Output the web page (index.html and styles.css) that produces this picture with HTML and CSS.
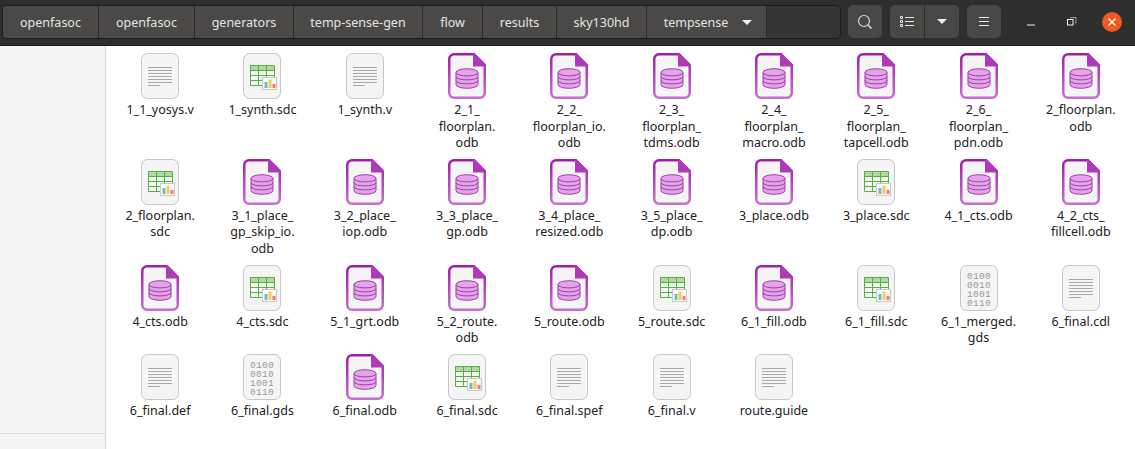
FILE: index.html
```html
<!DOCTYPE html>
<html lang="en">
<head>
  <meta charset="UTF-8" />
  <title>tempsense</title>
  <link rel="stylesheet" href="styles.css">
</head>
<body>
  <svg class="defs" aria-hidden="true">
    <defs>
      <linearGradient id="purple" x1="0" y1="0" x2="0" y2="1">
        <stop offset="0" stop-color="#a01fa8" />
        <stop offset="1" stop-color="#c76fd0" />
      </linearGradient>
      <symbol id="text" viewBox="0 0 48 48">
        <rect x="5.5" y="1.5" width="37" height="45" rx="6" fill="#f5f5f5" stroke="#c6c6c6" />
        <path d="M12 15.500h24M12 18.500h24M12 21.500h24M12 24.500h24M12 27.500h24M12 30.500h24M12 33.500h12" stroke="#a8a8a8" fill="none" />
      </symbol>
      <symbol id="sheet" viewBox="0 0 48 48">
        <rect x="5.5" y="1.5" width="37" height="45" rx="6" fill="#f5f5f5" stroke="#c6c6c6" />
        <rect x="12" y="13" width="24" height="5" fill="#b4d8a4" />
        <path d="M12.500 13.500h24v20h-24zM12.500 18.500h24M12.500 23.500h24M12.500 28.500h24M20.500 13.500v20M28.500 13.500v20" stroke="#55b043" fill="none" />
        <rect x="24.5" y="25.5" width="14" height="12" fill="#fafafa" stroke="#c8c8c8" />
        <rect x="26.5" y="30" width="3" height="6" fill="#6fbdc2" />
        <rect x="30.5" y="27.5" width="3" height="8.5" fill="#f5cb62" />
        <rect x="34.5" y="32" width="3" height="4" fill="#f37c62" />
      </symbol>
      <symbol id="base" viewBox="0 0 48 48">
        <path d="M11 2.250h20l10.750 10.750v28a4.750 4.750 0 0 1-4.750 4.750h-26a4.750 4.750 0 0 1-4.750-4.750v-34a4.750 4.750 0 0 1 4.750-4.750z" fill="#f5f5f5" stroke="url(#purple)" stroke-width="2.500" />
        <path d="M30 1.500h1.500l11.500 11.500v1.500h-13z" fill="#ae3ab6" />
        <path d="M13 20.500c0-5 22-5 22 0v12c0 5-22 5-22 0z" fill="#e2a6e8" stroke="#a53cae" />
        <path d="M13 20.500c0 4.500 22 4.500 22 0M13 24.500c0 4.500 22 4.500 22 0M13 28.500c0 4.500 22 4.500 22 0" fill="none" stroke="#a53cae" />
      </symbol>
      <symbol id="bin" viewBox="0 0 48 48">
        <rect x="5.5" y="1.5" width="37" height="45" rx="6" fill="#f5f5f5" stroke="#c6c6c6" />
        <text class="bits" x="24" y="14.500">0100</text>
        <text class="bits" x="24" y="24">0010</text>
        <text class="bits" x="24" y="33">1001</text>
        <text class="bits" x="24" y="42">0110</text>
      </symbol>
    </defs>
  </svg>

  <header class="toolbar">
    <nav class="path">
      <span class="crumb">openfasoc</span>
      <span class="crumb">openfasoc</span>
      <span class="crumb">generators</span>
      <span class="crumb">temp-sense-gen</span>
      <span class="crumb">flow</span>
      <span class="crumb">results</span>
      <span class="crumb">sky130hd</span>
      <span class="crumb crumb-current">tempsense <i class="caret"></i></span>
      <span class="crumb-rest"></span>
    </nav>
    <button class="tool tool-search">
      <svg width="16" height="16" viewBox="0 0 16 16"><circle cx="7" cy="7" r="5.500" fill="none" stroke="#d8d8d8" stroke-width="1.200" /><path d="M11 11l3.500 3.500" stroke="#d8d8d8" stroke-width="1.600" /></svg>
    </button>
    <div class="tool-group">
      <button class="tool tool-list">
        <svg width="14" height="12" viewBox="0 0 14 12"><path d="M.5.500h2v2h-2zM.5 4.500h2v2h-2zM.5 8.500h2v2h-2z" fill="none" stroke="#e8e8e8" /><path d="M5 1.500h9M5 5.500h9M5 9.500h9" stroke="#e8e8e8" /></svg>
      </button>
      <button class="tool tool-drop"><i class="caret"></i></button>
    </div>
    <button class="tool tool-menu">
      <svg width="12" height="10" viewBox="0 0 12 10"><path d="M1 .500h10M1 4.500h10M1 8.500h10" stroke="#e8e8e8" /></svg>
    </button>
    <div class="window-btns">
      <svg class="win-min" width="10" height="2" viewBox="0 0 10 2"><path d="M0 1h8" stroke="#eee" /></svg>
      <svg class="win-max" width="10" height="10" viewBox="0 0 10 10"><path d="M3.500 1.500v-1h5.500v5.500h-1.500" fill="none" stroke="#999" /><rect x=".5" y="2.500" width="5.500" height="5.500" fill="none" stroke="#eee" /></svg>
      <span class="win-close">
        <svg width="8" height="8" viewBox="0 0 8 8"><path d="M.5.500l7 7M7.500.500l-7 7" stroke="#fff" stroke-width="1.300" /></svg>
      </span>
    </div>
  </header>

  <div class="main">
    <aside class="sidebar"><div class="sidebar-foot"></div></aside>
    <section class="files">
      <div class="file"><svg class="icon"><use href="#text" /></svg><span>1_1_yosys.v</span></div>
      <div class="file"><svg class="icon"><use href="#sheet" /></svg><span>1_synth.sdc</span></div>
      <div class="file"><svg class="icon"><use href="#text" /></svg><span>1_synth.v</span></div>
      <div class="file"><svg class="icon"><use href="#base" /></svg><span>2_1_<br>floorplan.<br>odb</span></div>
      <div class="file"><svg class="icon"><use href="#base" /></svg><span>2_2_<br>floorplan_io.<br>odb</span></div>
      <div class="file"><svg class="icon"><use href="#base" /></svg><span>2_3_<br>floorplan_<br>tdms.odb</span></div>
      <div class="file"><svg class="icon"><use href="#base" /></svg><span>2_4_<br>floorplan_<br>macro.odb</span></div>
      <div class="file"><svg class="icon"><use href="#base" /></svg><span>2_5_<br>floorplan_<br>tapcell.odb</span></div>
      <div class="file"><svg class="icon"><use href="#base" /></svg><span>2_6_<br>floorplan_<br>pdn.odb</span></div>
      <div class="file"><svg class="icon"><use href="#base" /></svg><span>2_floorplan.<br>odb</span></div>

      <div class="file"><svg class="icon"><use href="#sheet" /></svg><span>2_floorplan.<br>sdc</span></div>
      <div class="file"><svg class="icon"><use href="#base" /></svg><span>3_1_place_<br>gp_skip_io.<br>odb</span></div>
      <div class="file"><svg class="icon"><use href="#base" /></svg><span>3_2_place_<br>iop.odb</span></div>
      <div class="file"><svg class="icon"><use href="#base" /></svg><span>3_3_place_<br>gp.odb</span></div>
      <div class="file"><svg class="icon"><use href="#base" /></svg><span>3_4_place_<br>resized.odb</span></div>
      <div class="file"><svg class="icon"><use href="#base" /></svg><span>3_5_place_<br>dp.odb</span></div>
      <div class="file"><svg class="icon"><use href="#base" /></svg><span>3_place.odb</span></div>
      <div class="file"><svg class="icon"><use href="#sheet" /></svg><span>3_place.sdc</span></div>
      <div class="file"><svg class="icon"><use href="#base" /></svg><span>4_1_cts.odb</span></div>
      <div class="file"><svg class="icon"><use href="#base" /></svg><span>4_2_cts_<br>fillcell.odb</span></div>

      <div class="file"><svg class="icon"><use href="#base" /></svg><span>4_cts.odb</span></div>
      <div class="file"><svg class="icon"><use href="#sheet" /></svg><span>4_cts.sdc</span></div>
      <div class="file"><svg class="icon"><use href="#base" /></svg><span>5_1_grt.odb</span></div>
      <div class="file"><svg class="icon"><use href="#base" /></svg><span>5_2_route.<br>odb</span></div>
      <div class="file"><svg class="icon"><use href="#base" /></svg><span>5_route.odb</span></div>
      <div class="file"><svg class="icon"><use href="#sheet" /></svg><span>5_route.sdc</span></div>
      <div class="file"><svg class="icon"><use href="#base" /></svg><span>6_1_fill.odb</span></div>
      <div class="file"><svg class="icon"><use href="#sheet" /></svg><span>6_1_fill.sdc</span></div>
      <div class="file"><svg class="icon"><use href="#bin" /></svg><span>6_1_merged.<br>gds</span></div>
      <div class="file"><svg class="icon"><use href="#text" /></svg><span>6_final.cdl</span></div>

      <div class="file"><svg class="icon"><use href="#text" /></svg><span>6_final.def</span></div>
      <div class="file"><svg class="icon"><use href="#bin" /></svg><span>6_final.gds</span></div>
      <div class="file"><svg class="icon"><use href="#base" /></svg><span>6_final.odb</span></div>
      <div class="file"><svg class="icon"><use href="#sheet" /></svg><span>6_final.sdc</span></div>
      <div class="file"><svg class="icon"><use href="#text" /></svg><span>6_final.spef</span></div>
      <div class="file"><svg class="icon"><use href="#text" /></svg><span>6_final.v</span></div>
      <div class="file"><svg class="icon"><use href="#text" /></svg><span>route.guide</span></div>
    </section>
  </div>
</body>
</html>
```

FILE: styles.css
```css
* {
  box-sizing: border-box;
}
html, body {
  height: 100%;
}
body {
  margin: 0;
  background: #fff;
  font-family: "Noto Sans", sans-serif;
  overflow: hidden;
  display: flex;
  flex-direction: column;
}
.defs {
  width: 0;
  height: 0;
  position: absolute;
}
.bits {
  font-family: "Liberation Mono", monospace;
  font-size: 9.5px;
  letter-spacing: .3px;
  fill: #9a9a9a;
  text-anchor: middle;
}

.toolbar {
  height: 46px;
  flex: none;
  display: flex;
  align-items: flex-start;
  padding: 5px 0 0 2px;
  background: #2f2e2e;
  border-bottom: 1px solid #1c1c1c;
}
.path {
  width: 839px;
  height: 34px;
  display: grid;
  grid-template-columns: 96px 96px 99px 129px 60px 74px 90px 120px 1fr;
  border: 1px solid #1e1e1e;
  border-radius: 5px;
  background: #353434;
  overflow: hidden;
}
.crumb {
  display: flex;
  align-items: center;
  justify-content: center;
  gap: 14px;
  background: #4a4947;
  color: #e4e4e4;
  font-size: 12.5px;
  border-right: 1px solid #2a2a2a;
}
.crumb-current {
  padding-left: 3px;
}
.caret {
  width: 0;
  height: 0;
  border-left: 5px solid transparent;
  border-right: 5px solid transparent;
  border-top: 5px solid #f0f0f0;
}

.tool {
  height: 33px;
  padding: 0;
  border: none;
  background: #484745;
  display: flex;
  align-items: center;
  justify-content: center;
}
.tool-search {
  width: 34px;
  margin-left: 7px;
  border-radius: 5px;
}
.tool-group {
  display: flex;
  margin-left: 8px;
}
.tool-list {
  width: 35px;
  border-radius: 5px 0 0 5px;
  border-right: 1px solid #2c2c2c;
}
.tool-drop {
  width: 34px;
  border-radius: 0 5px 5px 0;
}
.tool-menu {
  width: 34px;
  margin-left: 8px;
  border-radius: 5px;
}
.window-btns {
  flex: 1;
  height: 33px;
  display: flex;
  align-items: center;
  padding-left: 26px;
}
.win-min {
  margin-top: 7px;
}
.win-max {
  margin-left: 30px;
}
.win-close {
  width: 20px;
  height: 20px;
  margin-left: 25px;
  border-radius: 50%;
  background: #ef5a23;
  display: flex;
  align-items: center;
  justify-content: center;
}

.main {
  flex: 1;
  display: flex;
  min-height: 0;
}
.sidebar {
  width: 106px;
  flex: none;
  background: #f5f5f5;
  border-right: 1px solid #d8d8d8;
  display: flex;
  flex-direction: column;
  justify-content: flex-end;
}
.sidebar-foot {
  height: 16px;
  border-top: 1px solid #dcdcdc;
}
.files {
  flex: 1;
  padding: 6px 0 0 3px;
  display: grid;
  grid-template-columns: repeat(10, 102.3px);
  grid-auto-rows: max-content;
  row-gap: 6.4px;
}
.file {
  display: flex;
  flex-direction: column;
  align-items: center;
  text-align: center;
  font-size: 12.5px;
  line-height: 16.5px;
  color: #222;
}
.icon {
  width: 48px;
  height: 48px;
  margin-bottom: 2px;
}
```
